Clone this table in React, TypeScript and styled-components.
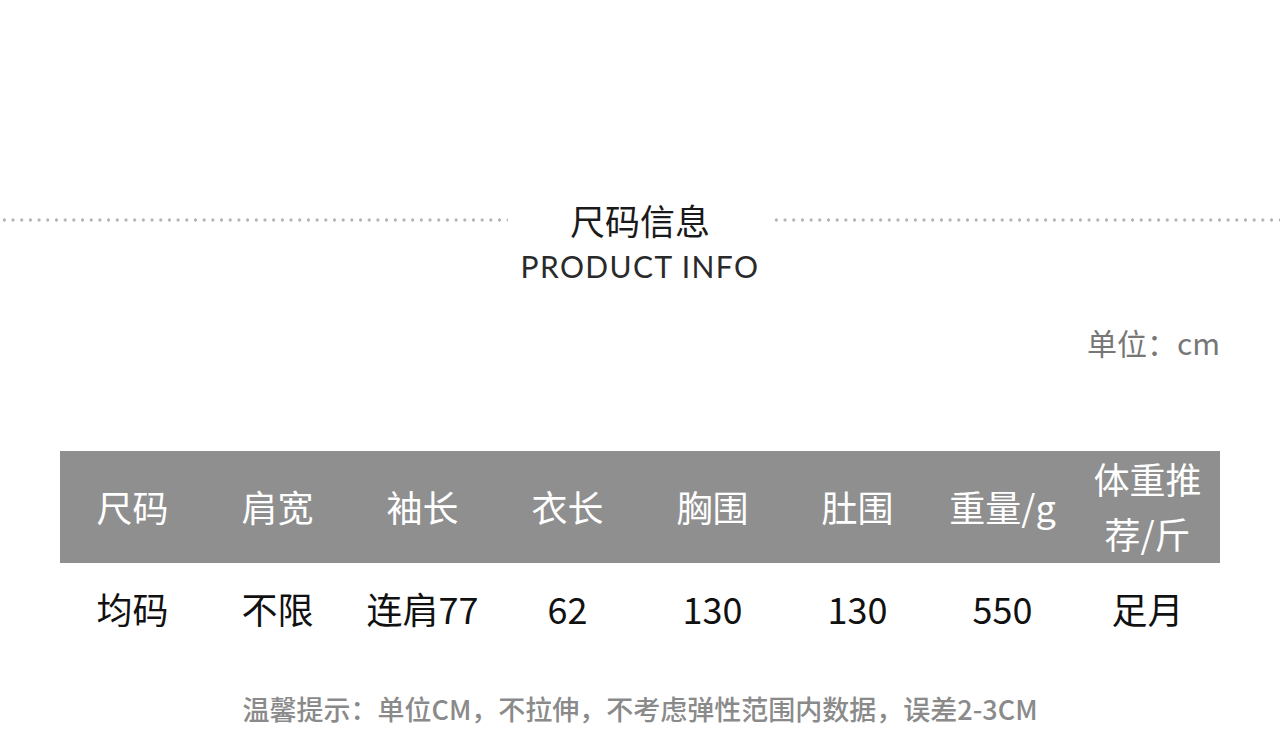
import React from "react";
import styled, { createGlobalStyle } from "styled-components";

const GlobalStyle = createGlobalStyle`
  html, body {
    margin: 0;
    padding: 0;
    background: #fff;
  }
  body {
    font-family: "Noto Sans CJK SC", "Noto Sans", sans-serif;
  }
`;

const Page = styled.div`
  width: 1280px;
  height: 732px;
  padding-top: 198px;
  box-sizing: border-box;
  overflow: hidden;
`;

const TitleRow = styled.div`
  display: flex;
  align-items: center;
  height: 44px;
`;

const DottedLine = styled.div`
  flex: 1;
  height: 6px;
  background-image: radial-gradient(circle, #b5b5b5 1.4px, transparent 1.9px);
  background-size: 8.7px 6px;
  background-repeat: repeat-x;
`;

const Title = styled.h1`
  margin: 0 62px;
  font-size: 35px;
  font-weight: 400;
  line-height: 44px;
  color: #1a1a1a;
`;

const Subtitle = styled.div`
  margin-top: 4px;
  text-align: center;
  font-family: "Lato", "Open Sans", sans-serif;
  font-size: 30px;
  line-height: 40px;
  color: #2a2a2a;
  letter-spacing: 1.4px;
`;

const UnitRow = styled.div`
  margin-top: 36px;
  padding-right: 60px;
  text-align: right;
  font-size: 30px;
  line-height: 40px;
  color: #777;
`;

const Table = styled.div`
  margin: 89px 60px 0;
`;

const Row = styled.div<{ $head?: boolean }>`
  display: grid;
  grid-template-columns: repeat(8, 1fr);
  height: ${(p) => (p.$head ? "112px" : "96px")};
  background: ${(p) => (p.$head ? "#8f8f8f" : "transparent")};
  color: ${(p) => (p.$head ? "#fff" : "#111")};
`;

const Cell = styled.div`
  display: flex;
  align-items: center;
  justify-content: center;
  padding: 0 12px 5px;
  text-align: center;
  font-size: 36px;
  line-height: 55px;
`;

const Note = styled.div`
  margin-top: 30px;
  text-align: center;
  font-size: 27px;
  font-weight: 500;
  line-height: 40px;
  color: #8a8a8a;
`;

const heads = ["尺码", "肩宽", "袖长", "衣长", "胸围", "肚围", "重量/g", "体重推荐/斤"];
const values = ["均码", "不限", "连肩77", "62", "130", "130", "550", "足月"];

export default function App() {
  return (
    <Page>
      <GlobalStyle />
      <TitleRow>
        <DottedLine />
        <Title>尺码信息</Title>
        <DottedLine />
      </TitleRow>
      <Subtitle>PRODUCT INFO</Subtitle>
      <UnitRow>单位：cm</UnitRow>
      <Table>
        <Row $head>
          {heads.map((h) => (
            <Cell key={h}>{h}</Cell>
          ))}
        </Row>
        <Row>
          {values.map((v, i) => (
            <Cell key={i}>{v}</Cell>
          ))}
        </Row>
      </Table>
      <Note>温馨提示：单位CM，不拉伸，不考虑弹性范围内数据，误差2-3CM</Note>
    </Page>
  );
}
